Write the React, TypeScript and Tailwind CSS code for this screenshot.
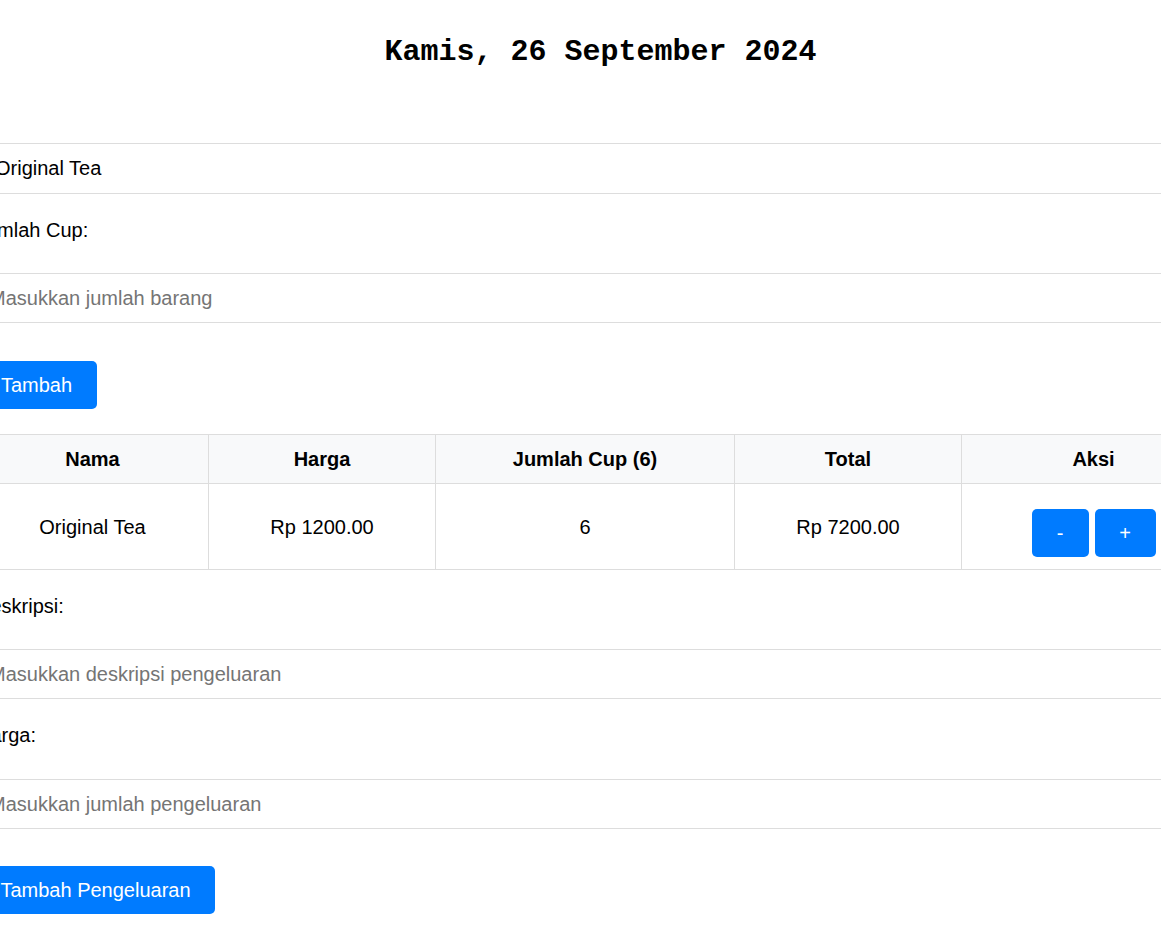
import React from "react";

// Items in the cart; a single row for now.
const ITEMS = [{ nama: "Original Tea", harga: 1200, jumlah: 6 }];

const labelCls = "block mt-[25px] leading-[23px] text-[20px] text-black";
const inputCls =
  "block w-full h-[50px] border border-[#ddd] pl-[12px] text-[20px] text-black placeholder:text-[#757575] outline-none";
const btnCls =
  "flex items-center justify-center h-[48px] rounded-[5px] bg-[#007bff] text-white text-[20px]";

export default function App() {
  const totalCup = ITEMS.reduce((s, i) => s + i.jumlah, 0);

  return (
    <div className="min-h-screen bg-white overflow-hidden">
      <div className="w-[1249px] ml-[-24px] pb-10 font-['Liberation_Sans',Arial,sans-serif] text-black">
        <h1 className="pt-[35px] text-center font-['Liberation_Mono','Courier_New',monospace] text-[30px] leading-[34px] font-bold">
          Kamis, 26 September 2024
        </h1>

        {/* Product picker */}
        <select
          defaultValue="original"
          className="block mt-[74px] w-full h-[51px] appearance-none border border-[#ddd] bg-white pl-[18px] pb-[2px] text-[20px] text-black outline-none"
        >
          <option value="original">Original Tea</option>
        </select>

        <label className={`${labelCls} mb-[31px]`}>Jumlah Cup:</label>
        <input type="number" className={inputCls} placeholder="Masukkan jumlah barang" />

        <button className={`${btnCls} mt-[38px] w-[121px]`}>Tambah</button>

        {/* Cart table */}
        <table className="mt-[25px] w-full table-fixed border-collapse text-[20px]">
          <colgroup>
            <col className="w-[232px]" />
            <col className="w-[227px]" />
            <col className="w-[299px]" />
            <col className="w-[227px]" />
            <col className="w-[264px]" />
          </colgroup>
          <thead>
            <tr className="bg-[#f8f9fa]">
              {["Nama", "Harga", `Jumlah Cup (${totalCup})`, "Total", "Aksi"].map((h) => (
                <th key={h} className="h-[49px] border border-[#ddd] text-center font-bold">
                  {h}
                </th>
              ))}
            </tr>
          </thead>
          <tbody>
            {ITEMS.map((it) => (
              <tr key={it.nama}>
                <td className="h-[86px] border border-[#ddd] text-center align-middle">{it.nama}</td>
                <td className="border border-[#ddd] text-center align-middle">Rp {it.harga.toFixed(2)}</td>
                <td className="border border-[#ddd] text-center align-middle">{it.jumlah}</td>
                <td className="border border-[#ddd] text-center align-middle">
                  Rp {(it.harga * it.jumlah).toFixed(2)}
                </td>
                <td className="border border-[#ddd] align-top pt-[25px]">
                  <div className="flex justify-center gap-[6px]">
                    <button className={`${btnCls} w-[57px]`}>-</button>
                    <button className={`${btnCls} w-[61px]`}>+</button>
                  </div>
                </td>
              </tr>
            ))}
          </tbody>
        </table>

        {/* Expense form */}
        <label className={`${labelCls} mb-[31px]`}>Deskripsi:</label>
        <input type="text" className={inputCls} placeholder="Masukkan deskripsi pengeluaran" />

        <label className={`${labelCls} mb-[32px]`}>Harga:</label>
        <input type="number" className={inputCls} placeholder="Masukkan jumlah pengeluaran" />

        <button className={`${btnCls} mt-[37px] w-[239px]`}>Tambah Pengeluaran</button>
      </div>
    </div>
  );
}
